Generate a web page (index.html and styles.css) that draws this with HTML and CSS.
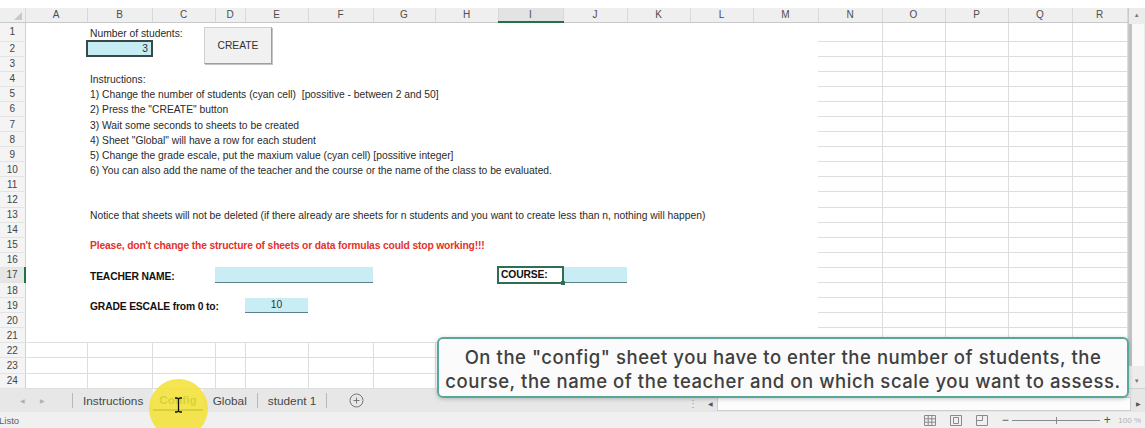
FILE: index.html
```html
<!DOCTYPE html>
<html lang="en">
<head>
<meta charset="utf-8">
<title>Config</title>
<link rel="stylesheet" href="styles.css">
</head>
<body>
<div class="app">
  <div class="sheet-area">
    <table class="sheet">
      <colgroup>
        <col class="w25"><col class="w62"><col class="w65"><col class="w63"><col class="w30"><col class="w63"><col class="w65"><col class="w62"><col class="w63"><col class="w65"><col class="w64"><col class="w63"><col class="w63"><col class="w65"><col class="w64"><col class="w63"><col class="w63"><col class="w64"><col class="w55">
      </colgroup>
      <thead>
        <tr>
          <th class="corner"><span class="corner-mark"></span></th>
          <th>A</th><th>B</th><th>C</th><th>D</th><th>E</th><th>F</th><th>G</th><th>H</th><th class="sel">I</th><th>J</th><th>K</th><th>L</th><th>M</th><th>N</th><th>O</th><th>P</th><th>Q</th><th>R</th>
        </tr>
      </thead>
      <tbody>
        <tr class="first"><th>1</th><td></td><td colspan="12" class="txt">Number of students:</td><td></td><td></td><td></td><td></td><td></td></tr>
        <tr><th>2</th><td></td><td class="input current num">3</td><td colspan="11"></td><td></td><td></td><td></td><td></td><td></td></tr>
        <tr><th>3</th><td colspan="13"></td><td></td><td></td><td></td><td></td><td></td></tr>
        <tr><th>4</th><td></td><td colspan="12" class="txt">Instructions:</td><td></td><td></td><td></td><td></td><td></td></tr>
        <tr><th>5</th><td></td><td colspan="12" class="txt">1) Change the number of students (cyan cell)&nbsp; [possitive - between 2 and 50]</td><td></td><td></td><td></td><td></td><td></td></tr>
        <tr><th>6</th><td></td><td colspan="12" class="txt">2) Press the "CREATE" button</td><td></td><td></td><td></td><td></td><td></td></tr>
        <tr><th>7</th><td></td><td colspan="12" class="txt">3) Wait some seconds to sheets to be created</td><td></td><td></td><td></td><td></td><td></td></tr>
        <tr><th>8</th><td></td><td colspan="12" class="txt">4) Sheet "Global" will have a row for each student</td><td></td><td></td><td></td><td></td><td></td></tr>
        <tr><th>9</th><td></td><td colspan="12" class="txt">5) Change the grade escale, put the maxium value (cyan cell) [possitive integer]</td><td></td><td></td><td></td><td></td><td></td></tr>
        <tr><th>10</th><td></td><td colspan="12" class="txt">6) You can also add the name of the teacher and the course or the name of the class to be evaluated.</td><td></td><td></td><td></td><td></td><td></td></tr>
        <tr><th>11</th><td colspan="13"></td><td></td><td></td><td></td><td></td><td></td></tr>
        <tr><th>12</th><td colspan="13"></td><td></td><td></td><td></td><td></td><td></td></tr>
        <tr><th>13</th><td></td><td colspan="12" class="txt">Notice that sheets will not be deleted (if there already are sheets for n students and you want to create less than n, nothing will happen)</td><td></td><td></td><td></td><td></td><td></td></tr>
        <tr><th>14</th><td colspan="13"></td><td></td><td></td><td></td><td></td><td></td></tr>
        <tr><th>15</th><td></td><td colspan="12" class="txt warn">Please, don't change the structure of sheets or data formulas could stop working!!!</td><td></td><td></td><td></td><td></td><td></td></tr>
        <tr><th>16</th><td colspan="13"></td><td></td><td></td><td></td><td></td><td></td></tr>
        <tr><th class="sel">17</th><td></td><td colspan="2" class="txt strong">TEACHER NAME:</td><td colspan="3" class="input"></td><td colspan="2"></td><td class="txt strong boxed">COURSE:<span class="handle"></span></td><td class="input"></td><td colspan="3"></td><td></td><td></td><td></td><td></td><td></td></tr>
        <tr><th>18</th><td colspan="13"></td><td></td><td></td><td></td><td></td><td></td></tr>
        <tr><th>19</th><td></td><td colspan="3" class="txt strong">GRADE ESCALE from 0 to:</td><td class="input mid">10</td><td colspan="8"></td><td></td><td></td><td></td><td></td><td></td></tr>
        <tr><th>20</th><td colspan="13"></td><td></td><td></td><td></td><td></td><td></td></tr>
        <tr class="edge"><th>21</th><td colspan="13"></td><td></td><td></td><td></td><td></td><td></td></tr>
        <tr class="gridrow"><th>22</th><td></td><td></td><td></td><td></td><td></td><td></td><td></td><td></td><td></td><td></td><td></td><td></td><td></td><td></td><td></td><td></td><td></td><td></td></tr>
        <tr class="gridrow"><th>23</th><td></td><td></td><td></td><td></td><td></td><td></td><td></td><td></td><td></td><td></td><td></td><td></td><td></td><td></td><td></td><td></td><td></td><td></td></tr>
        <tr class="gridrow"><th>24</th><td></td><td></td><td></td><td></td><td></td><td></td><td></td><td></td><td></td><td></td><td></td><td></td><td></td><td></td><td></td><td></td><td></td><td></td></tr>
      </tbody>
    </table>

    <div class="vscroll">
      <span class="vs-btn">&#9650;</span>
      <span class="vs-thumb"></span>
      <span class="vs-btn">&#9660;</span>
    </div>

    <button class="create-btn" type="button">CREATE</button>
  </div>

  <div class="tabbar">
    <span class="nav">&#9664;</span>
    <span class="nav">&#9654;</span>
    <span class="sep"></span>
    <span class="tab">Instructions</span>
    <span class="tab active">Config</span>
    <span class="tab">Global</span>
    <span class="sep"></span>
    <span class="tab">student 1</span>
    <span class="sep"></span>
    <span class="add-sheet">
      <svg width="15" height="15" viewBox="0 0 15 15"><circle cx="7.5" cy="7.5" r="6.5" fill="none" stroke="#777" stroke-width="1"/><path d="M7.5 4.5v6M4.5 7.5h6" stroke="#777" stroke-width="1"/></svg>
    </span>
    <span class="hscroll">
      <span class="hs-grip">&#8942;</span>
      <span class="hs-btn">&#9664;</span>
      <span class="hs-track"></span>
      <span class="hs-btn">&#9654;</span>
    </span>
  </div>

  <div class="statusbar">
    <span class="status">Listo</span>
    <span class="views">
      <svg width="12" height="11" viewBox="0 0 12 11"><path d="M.5 .5h11v10H.5zM.5 3.8h11M.5 7.2h11M4.2.5v10M7.8.5v10" fill="none" stroke="#8a8a8a"/></svg>
      <svg width="12" height="11" viewBox="0 0 12 11"><path d="M.5 .5h11v10H.5z" fill="none" stroke="#8a8a8a"/><path d="M3.5 2.5h5v6h-5z" fill="none" stroke="#8a8a8a"/></svg>
      <svg width="12" height="11" viewBox="0 0 12 11"><path d="M.5 .5h11v10H.5zM.5 5.5h6M6.5.5v5" fill="none" stroke="#8a8a8a"/></svg>
    </span>
    <span class="zoom">
      <span class="zm">&minus;</span>
      <span class="zoom-track"><span class="zoom-tick"></span></span>
      <span class="zm">+</span>
      <span class="zoom-pct">100 %</span>
    </span>
  </div>

  <div class="callout">On the "config" sheet you have to enter the number of students, the<br>course, the name of the teacher and on which scale you want to assess.</div>

  <div class="spotlight"></div>
  <svg class="ibeam" width="9" height="16" viewBox="0 0 9 16"><path d="M1 1h2.5M5.5 1H8M4.5 1.5v13M1 15h2.5M5.5 15H8M3 1.2c1 0 1.5.3 1.5 1M6 1.2c-1 0-1.5.3-1.5 1M3 14.8c1 0 1.5-.3 1.5-1M6 14.8c-1 0-1.5-.3-1.5-1" stroke="#111" stroke-width="1.3" fill="none"/></svg>
</div>
</body>
</html>
```

FILE: styles.css
```css
* { box-sizing: border-box; }

html, body {
  margin: 0;
  padding: 0;
}

body {
  width: 1145px;
  height: 428px;
  overflow: hidden;
  background: #ffffff;
  font-family: "Liberation Sans", Arial, sans-serif;
}

.app {
  position: relative;
  width: 1145px;
  height: 428px;
  padding-top: 8px;
  display: flex;
  flex-direction: column;
}

/* ---------- worksheet ---------- */

.sheet-area {
  position: relative;
  display: flex;
  height: 380px;
  flex: none;
}

.sheet {
  table-layout: fixed;
  width: 1127px;
  border-collapse: collapse;
  font-size: 10.3px;
  color: #2a2a2a;
  flex: none;
}

.w25 { width: 25px; }
.w30 { width: 30px; }
.w55 { width: 55px; }
.w62 { width: 62px; }
.w63 { width: 63px; }
.w64 { width: 64px; }
.w65 { width: 65px; }

.sheet th,
.sheet td {
  padding: 0;
  overflow: visible;
  white-space: nowrap;
}

.sheet thead th {
  height: 14px;
  background: #efefef;
  color: #4d4d4d;
  font-weight: normal;
  font-size: 10px;
  text-align: center;
  border-right: 1px solid #d9d9d9;
  border-bottom: 1px solid #c9c9c9;
}

.sheet thead th.sel {
  background: #e3e3e3;
  border-bottom: 2px solid #217346;
}

.sheet thead th.corner {
  position: relative;
  background: #efefef;
}

.corner-mark {
  position: absolute;
  right: 3px;
  bottom: 2px;
  width: 0;
  height: 0;
  border-left: 8px solid transparent;
  border-bottom: 8px solid #c8c8c8;
}

.sheet tbody tr { height: 15.1px; }
.sheet tbody tr.first { height: 19px; }

.sheet tbody th {
  background: #f4f4f4;
  color: #454545;
  font-weight: normal;
  font-size: 10px;
  text-align: center;
  border-right: 1px solid #d2d2d2;
  border-bottom: 1px solid #e3e3e3;
}

.sheet tbody th.sel {
  background: #e6e6e6;
  border-right: 2px solid #217346;
}

/* open columns N..R keep their gridlines */
.sheet tbody td:nth-last-child(-n+5) {
  border-right: 1px solid #dedede;
  border-bottom: 1px solid #dedede;
}

.sheet tr.edge td { border-bottom: 1px solid #dedede; }

.sheet tr.gridrow td {
  border-right: 1px solid #dedede;
  border-bottom: 1px solid #dedede;
}

.txt {
  padding: 0 3px !important;
  vertical-align: bottom;
  padding-bottom: 1px !important;
}

.warn {
  color: #e5322b;
  font-weight: bold;
  letter-spacing: -0.15px;
}

.strong {
  font-weight: bold;
  color: #111;
  letter-spacing: -0.15px;
}

.input {
  background: #c8edf5;
  border-bottom: 1px solid #5f7f86;
  color: #333;
}

.num {
  text-align: right;
  padding-right: 3px !important;
}

.mid {
  text-align: center;
}

.current {
  border: 2px solid #3a4847;
  background: #c6ecf4;
}

.boxed {
  position: relative;
  border: 2px solid #2f6e52;
  padding-left: 2px !important;
  vertical-align: middle;
}

.handle {
  position: absolute;
  right: -3px;
  bottom: -3px;
  width: 4px;
  height: 4px;
  background: #2f6e52;
}

.create-btn {
  position: absolute;
  left: 204px;
  top: 19px;
  width: 68px;
  height: 37px;
  background: #f1f1f1;
  border: 1px solid #cfcfcf;
  border-right-color: #9d9d9d;
  border-bottom-color: #9d9d9d;
  box-shadow: 1px 1px 0 #c4c4c4;
  font-family: "Liberation Sans", Arial, sans-serif;
  font-size: 10.3px;
  color: #333;
  padding: 0;
}

.vscroll {
  width: 18px;
  height: 380px;
  background: #ececec;
  border-left: 1px solid #c9c9c9;
  display: flex;
  flex-direction: column;
  align-items: center;
}

.vs-btn {
  font-size: 6px;
  color: #777;
  height: 14px;
  line-height: 14px;
}

.vs-thumb {
  flex: 1;
  width: 15px;
  background: #f9f9f9;
  border-left: 3px solid #c2c2c2;
  margin: 2px 0 8px;
}

/* ---------- sheet tabs ---------- */

.tabbar {
  flex: none;
  height: 24px;
  display: flex;
  align-items: center;
  background: #e7e7e7;
  border-top: 1px solid #d2d2d2;
  font-size: 11.8px;
  color: #484848;
}

.nav {
  font-size: 6px;
  color: #b0b0b0;
  width: 20px;
  text-align: center;
}

.nav:first-child { margin-left: 12px; }

.sep {
  width: 1px;
  height: 15px;
  background: #b8b8b8;
}

.nav + .sep { margin-left: 20px; }

.tab {
  padding: 0 10px;
  line-height: 22px;
}

.tab.active {
  height: 22px;
  margin-top: -2px;
  background: #f7f7f7;
  color: #217346;
  font-weight: bold;
  border-bottom: 2px solid #217346;
  padding: 0 6px;
  line-height: 22px;
}

.add-sheet {
  display: flex;
  margin-left: 22px;
}

.hscroll {
  margin-left: auto;
  display: flex;
  align-items: center;
  width: 462px;
  height: 16px;
  margin-top: 6px;
}

.hs-grip {
  color: #999;
  font-size: 10px;
  width: 20px;
  text-align: center;
}

.hs-btn {
  font-size: 6px;
  color: #555;
  width: 14px;
  text-align: center;
}

.hs-track {
  flex: 1;
  height: 14px;
  background: #fdfdfd;
  border: 1px solid #cdcdcd;
}

/* ---------- status bar ---------- */

.statusbar {
  flex: none;
  height: 16px;
  display: flex;
  align-items: center;
  background: #f0f0f0;
  font-size: 9.5px;
  color: #606060;
}

.status {
  margin-left: -1px;
}

.views {
  margin-left: auto;
  display: flex;
  gap: 14px;
}

.zoom {
  display: flex;
  align-items: center;
  margin-left: 12px;
  margin-right: 4px;
}

.zm {
  font-size: 12px;
  color: #555;
  width: 10px;
  text-align: center;
}

.zoom-track {
  position: relative;
  width: 88px;
  height: 1px;
  background: #8a8a8a;
  margin: 0 2px;
}

.zoom-tick {
  position: absolute;
  left: 44px;
  top: -3px;
  width: 1px;
  height: 7px;
  background: #8a8a8a;
}

.zoom-pct {
  margin-left: 6px;
  font-size: 8px;
  color: #b0b0b0;
}

/* ---------- caption overlay ---------- */

.callout {
  position: absolute;
  left: 437px;
  top: 337px;
  width: 692px;
  height: 61px;
  border: 2px solid #57a899;
  border-radius: 6px;
  background: rgba(251, 251, 251, 0.97);
  box-shadow: 0 1px 4px rgba(0, 0, 0, 0.22);
  font-family: Inter, "Liberation Sans", sans-serif;
  font-size: 18.5px;
  font-weight: 500;
  letter-spacing: 0.55px;
  line-height: 24px;
  color: #404040;
  text-align: center;
  padding-top: 6px;
  white-space: nowrap;
}

/* ---------- pointer highlight ---------- */

.spotlight {
  position: absolute;
  left: 149px;
  top: 379px;
  width: 59px;
  height: 59px;
  border-radius: 50%;
  background: #f3e234;
  opacity: 0.86;
}

.ibeam {
  position: absolute;
  left: 174px;
  top: 397px;
}
```
